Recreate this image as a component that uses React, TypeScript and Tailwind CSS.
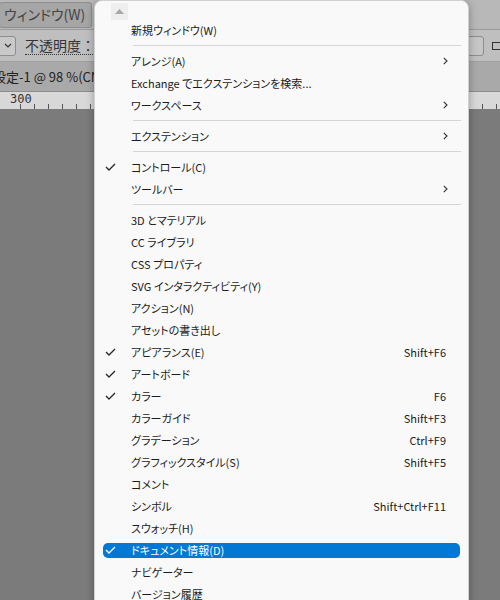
import React from 'react';

type Item =
  | { sep: true }
  | { label: string; check?: boolean; sub?: boolean; key?: string; active?: boolean };

const items: Item[] = [
  { label: '新規ウィンドウ(W)' },
  { sep: true },
  { label: 'アレンジ(A)', sub: true },
  { label: 'Exchange でエクステンションを検索...' },
  { label: 'ワークスペース', sub: true },
  { sep: true },
  { label: 'エクステンション', sub: true },
  { sep: true },
  { label: 'コントロール(C)', check: true },
  { label: 'ツールバー', sub: true },
  { sep: true },
  { label: '3D とマテリアル' },
  { label: 'CC ライブラリ' },
  { label: 'CSS プロパティ' },
  { label: 'SVG インタラクティビティ(Y)' },
  { label: 'アクション(N)' },
  { label: 'アセットの書き出し' },
  { label: 'アピアランス(E)', check: true, key: 'Shift+F6' },
  { label: 'アートボード', check: true },
  { label: 'カラー', check: true, key: 'F6' },
  { label: 'カラーガイド', key: 'Shift+F3' },
  { label: 'グラデーション', key: 'Ctrl+F9' },
  { label: 'グラフィックスタイル(S)', key: 'Shift+F5' },
  { label: 'コメント' },
  { label: 'シンボル', key: 'Shift+Ctrl+F11' },
  { label: 'スウォッチ(H)' },
  { label: 'ドキュメント情報(D)', check: true, active: true },
  { label: 'ナビゲーター' },
  { label: 'バージョン履歴' },
];

function Check({ white }: { white?: boolean }) {
  return (
    <svg width="11" height="8" viewBox="0 0 11 8" fill="none">
      <path d="M1 4 L4 7 L10 1" stroke={white ? '#ffffff' : '#2a2a2a'} strokeWidth="1.4" />
    </svg>
  );
}

function Chevron() {
  return (
    <svg width="5" height="8" viewBox="0 0 5 8" fill="none">
      <path d="M0.8 0.8 L4 4 L0.8 7.2" stroke="#3a3a3a" strokeWidth="1.2" />
    </svg>
  );
}

function Ticks() {
  return (
    <div className="flex items-end h-full">
      {Array.from({ length: 40 }).map((_, i) => (
        <div key={i} className="w-[14px] h-full flex items-end shrink-0">
          <div className="w-px h-[5px] bg-[#555]" />
        </div>
      ))}
    </div>
  );
}

export default function App() {
  return (
    <div className="relative w-[500px] h-[600px] overflow-hidden bg-[#7b7b7b] [font-family:'Segoe_UI','Noto_Sans_CJK_JP',sans-serif]">
      {/* app chrome behind the menu */}
      <div className="flex flex-col h-full">
        <div className="h-[30px] bg-[#b8b8b8] border-b border-[#9c9c9c] flex items-center">
          <div className="h-[26px] w-[93px] -ml-px bg-[#a6a6a6] border border-[#8e8e8e] rounded-[3px] flex items-center pl-[4px] text-[14px] text-[#444] [font-feature-settings:'palt']">
            ウィンドウ(W)
          </div>
        </div>
        <div className="h-[32px] bg-[#bfbfbf] border-b border-[#a0a0a0] flex items-center justify-between">
          <div className="flex items-center">
            <div className="w-[17px] h-[20px] -ml-px bg-[#c9c9c9] border border-[#8e8e8e] rounded-r-[3px] flex items-center justify-center">
              <svg width="8" height="5" viewBox="0 0 8 5" fill="none">
                <path d="M1 1 L4 4 L7 1" stroke="#333" strokeWidth="1.2" />
              </svg>
            </div>
            <span className="ml-[9px] text-[14px] text-[#333] border-b border-dotted border-[#333] leading-[17px]">
              不透明度：
            </span>
            <div className="ml-[4px] w-[20px] h-[20px] bg-[#c6c6c6] border border-[#8e8e8e] rounded-l-[3px]" />
          </div>
          <div className="flex items-center gap-[8px]">
            <div className="w-[16px] h-[20px] bg-[#c6c6c6] border border-[#8e8e8e] rounded-r-[3px]" />
            <div className="w-[8px] h-[8px] border border-[#333] border-r-0" />
          </div>
        </div>
        <div className="h-[30px] bg-[#a9a9a9] border-b border-[#8c8c8c] flex items-center overflow-hidden">
          <div className="w-[94px] overflow-hidden shrink-0">
            <span className="block -ml-[7px] whitespace-nowrap text-[13px] text-[#222] [font-family:'Noto_Sans_CJK_JP','DejaVu_Sans_Mono',monospace]">
              設定-1 @ 98 %(CMY
            </span>
          </div>
        </div>
        <div className="h-[17px] bg-[#d8d8d8] flex relative overflow-hidden">
          <div className="w-px h-full bg-[#555] ml-[8px]" />
          <span className="absolute left-[10px] top-[-2px] text-[12px] text-[#333] [font-family:'DejaVu_Sans_Mono',monospace]">
            300
          </span>
          <div className="ml-[12px]">
            <Ticks />
          </div>
        </div>
        <div className="flex-1 bg-[#7b7b7b]" />
      </div>

      {/* dropdown menu */}
      <div className="absolute left-[94px] top-0 w-[375px] h-[620px] bg-[#f9f9f9] rounded-[8px] border border-[#d0d0d0] shadow-[0_2px_8px_rgba(0,0,0,0.3)] text-[11px] text-[#1b1b1b] [font-feature-settings:'palt']">
        <div className="h-[18px] pl-[16px] pt-[2px]">
          <div className="w-[17px] h-[17px] bg-[#eeeeee] flex items-center justify-center">
            <svg width="9" height="5" viewBox="0 0 9 5">
              <path d="M0 5 L4.5 0 L9 5 Z" fill="#a6a6a6" />
            </svg>
          </div>
        </div>
        {items.map((it, i) =>
          'sep' in it ? (
            <div key={i} className="h-[9px] pt-[4px] pl-[38px] pr-[7px]">
              <div className="h-px bg-[#d6d6d6]" />
            </div>
          ) : (
            <div key={i} className="h-[22px] px-[8px] flex items-center">
              <div
                className={
                  it.active
                    ? 'flex-1 h-[15px] flex items-center rounded-[5px] bg-[#0078d4] text-white'
                    : 'flex-1 h-[15px] flex items-center'
                }
              >
                <div className="w-[28px] pl-[2px] flex items-center">
                  {it.check && <Check white={it.active} />}
                </div>
                <span className="flex-1 whitespace-nowrap">{it.label}</span>
                {it.key && <span className="pr-[14px] whitespace-nowrap">{it.key}</span>}
                {it.sub && (
                  <span className="pr-[12px] flex items-center">
                    <Chevron />
                  </span>
                )}
              </div>
            </div>
          )
        )}
      </div>
    </div>
  );
}
